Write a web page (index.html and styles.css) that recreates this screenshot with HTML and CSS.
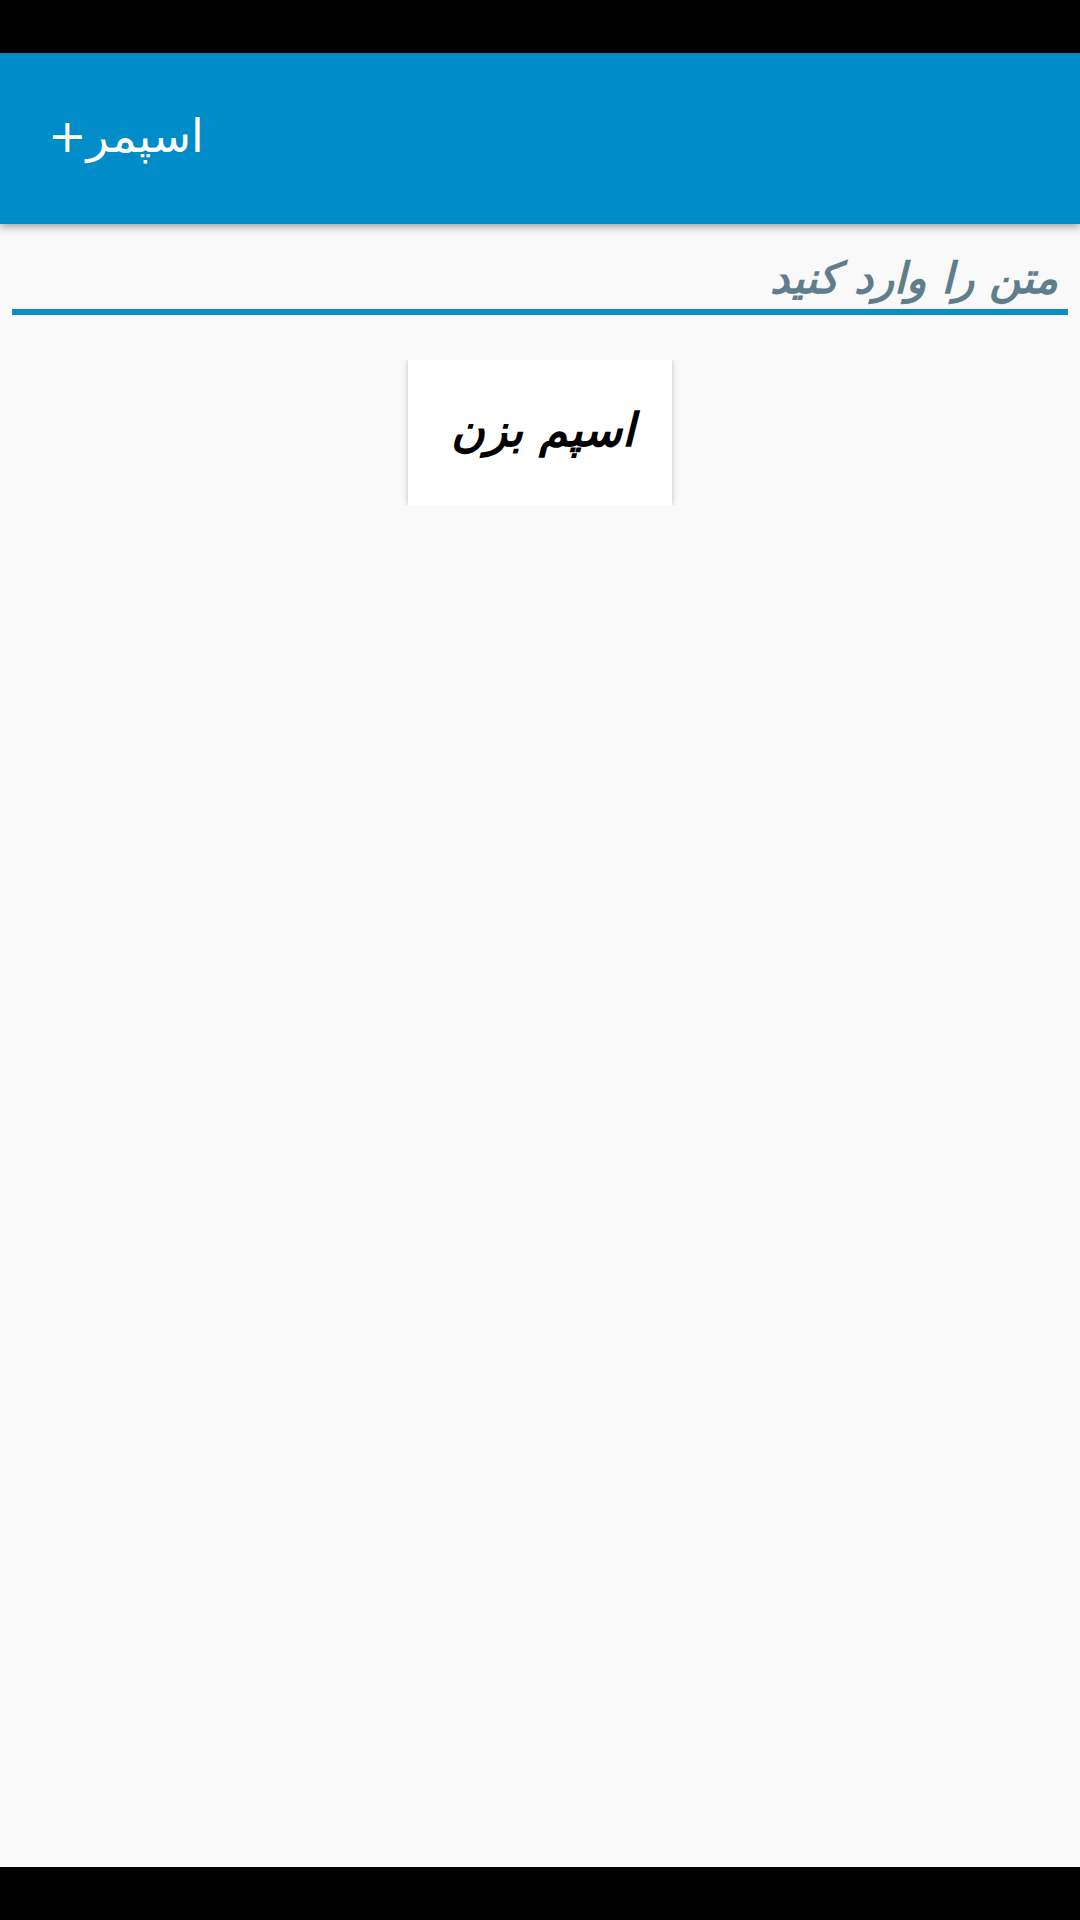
FILE: index.html
```html
<!DOCTYPE html>
<html lang="fa">

<head>
  <meta charset="UTF-8">
  <meta name="viewport" content="width=device-width, initial-scale=1.0">
  <title>اسپمر+</title>
  <link rel="stylesheet" href="styles.css">
</head>

<body>
  <div class="status-bar"></div>
  <header class="app-bar">
    <h1 class="app-title" dir="rtl">اسپمر+</h1>
  </header>
  <main class="content">
    <div class="text-field" dir="rtl">متن را وارد کنید</div>
    <div class="actions">
      <button class="spam-button">اسپم بزن</button>
    </div>
  </main>
  <div class="nav-bar"></div>
</body>

</html>
```

FILE: styles.css
```css
html,
body {
  margin: 0;
  padding: 0;
}

body {
  width: 1080px;
  height: 1920px;
  display: flex;
  flex-direction: column;
  background-color: #f9f9f9;
  font-family: "DejaVu Sans", sans-serif;
  overflow: hidden;
}

.status-bar {
  height: 53px;
  background-color: #000;
}

.app-bar {
  height: 171px;
  padding-left: 48px;
  padding-bottom: 6px;
  box-sizing: border-box;
  display: flex;
  align-items: center;
  background-color: #008cc9;
  box-shadow: 0 3px 8px rgba(0, 0, 0, 0.35);
}

.app-title {
  margin: 0;
  color: #fff;
  font-size: 46px;
  font-weight: normal;
}

.content {
  flex: 1;
  padding: 0 12px;
}

.text-field {
  height: 91px;
  padding-right: 10px;
  padding-bottom: 2px;
  box-sizing: border-box;
  display: flex;
  align-items: flex-end;
  border-bottom: 6px solid #0a8dbf;
  color: #607d8b;
  font-size: 43px;
  font-weight: bold;
  font-style: italic;
  line-height: 58px;
}

.actions {
  display: flex;
  justify-content: center;
  padding-top: 45px;
}

.spam-button {
  width: 264px;
  height: 145px;
  padding: 0 0 6px 6px;
  border: none;
  background: #fff;
  box-shadow: 0 0 5px rgba(0, 0, 0, 0.25);
  clip-path: inset(0 -8px);
  color: #000;
  font-family: inherit;
  font-size: 46px;
  font-weight: bold;
  font-style: italic;
}

.nav-bar {
  height: 53px;
  background-color: #000;
}
```
